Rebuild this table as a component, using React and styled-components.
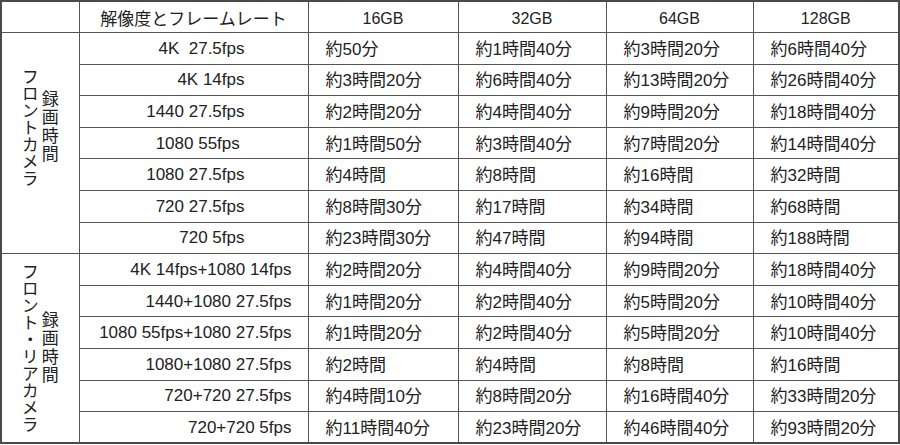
import React from "react";
import styled, { createGlobalStyle } from "styled-components";

const GlobalStyle = createGlobalStyle`
  body {
    margin: 0;
    background: #fff;
    color: #222;
  }
`;

const sizes = ["16GB", "32GB", "64GB", "128GB"];

const sections = [
  {
    label: "フロントカメラ",
    shift: 32,
    inset: 63,
    rows: [
      ["4K  27.5fps", "約50分", "約1時間40分", "約3時間20分", "約6時間40分"],
      ["4K 14fps", "約3時間20分", "約6時間40分", "約13時間20分", "約26時間40分"],
      ["1440 27.5fps", "約2時間20分", "約4時間40分", "約9時間20分", "約18時間40分"],
      ["1080 55fps ", "約1時間50分", "約3時間40分", "約7時間20分", "約14時間40分"],
      ["1080 27.5fps", "約4時間", "約8時間", "約16時間", "約32時間"],
      ["720 27.5fps", "約8時間30分", "約17時間", "約34時間", "約68時間"],
      ["720 5fps", "約23時間30分", "約47時間", "約94時間", "約188時間"],
    ],
  },
  {
    label: "フロント・リアカメラ",
    shift: 0,
    inset: 16,
    rows: [
      ["4K 14fps+1080 14fps", "約2時間20分", "約4時間40分", "約9時間20分", "約18時間40分"],
      ["1440+1080 27.5fps", "約1時間20分", "約2時間40分", "約5時間20分", "約10時間40分"],
      ["1080 55fps+1080 27.5fps", "約1時間20分", "約2時間40分", "約5時間20分", "約10時間40分"],
      ["1080+1080 27.5fps", "約2時間", "約4時間", "約8時間", "約16時間"],
      ["720+720 27.5fps", "約4時間10分", "約8時間20分", "約16時間40分", "約33時間20分"],
      ["720+720 5fps", "約11時間40分", "約23時間20分", "約46時間40分", "約93時間20分"],
    ],
  },
];

// digits are set in a narrower latin face than the kana/kanji around them
function Duration({ text }) {
  return text
    .split(/(\d+)/)
    .map((part, i) => (/\d/.test(part) ? <Num key={i}>{part}</Num> : part));
}

export default function App() {
  return (
    <>
      <GlobalStyle />
      <Table>
        <colgroup>
          <Col $w={78} />
          <Col $w={229} />
          <Col $w={150} />
          <Col $w={148} />
          <Col $w={147} />
          <Col $w={146} />
        </colgroup>
        <thead>
          <Row>
            <Corner />
            <HeadCell>解像度とフレームレート</HeadCell>
            {sizes.map((s) => (
              <HeadCell key={s}>
                <Latin>{s}</Latin>
              </HeadCell>
            ))}
          </Row>
        </thead>
        {sections.map((section) => (
          <tbody key={section.label}>
            {section.rows.map(([mode, ...times], index) => (
              <Row key={mode}>
                {index === 0 && (
                  <SideCell rowSpan={section.rows.length} $shift={section.shift}>
                    <SideLabel>
                      <Vertical>{section.label}</Vertical>
                      <Vertical $spaced>録画時間</Vertical>
                    </SideLabel>
                  </SideCell>
                )}
                <ModeCell $inset={section.inset}>{mode}</ModeCell>
                {times.map((t, i) => (
                  <TimeCell key={i}>
                    <Duration text={t} />
                  </TimeCell>
                ))}
              </Row>
            ))}
          </tbody>
        ))}
      </Table>
    </>
  );
}

const Table = styled.table`
  width: 898px;
  table-layout: fixed;
  border-collapse: collapse;
  border: 2px solid #4a4a4a;
  font-family: "Noto Sans CJK JP", "Liberation Sans", sans-serif;
  font-size: 17px;
  line-height: 1;
  color: #222;
`;

const Col = styled.col`
  width: ${(p) => p.$w}px;
`;

const Row = styled.tr`
  height: 31.6px;
`;

const Cell = styled.td`
  border: 1px solid #555;
  padding: 0;
  vertical-align: middle;
  white-space: nowrap;
`;

const Corner = styled(Cell).attrs({ as: "th" })``;

const HeadCell = styled(Cell).attrs({ as: "th" })`
  font-weight: normal;
  text-align: center;
`;

const Latin = styled.span`
  font-family: "Liberation Sans", Arial, sans-serif;
  font-size: 16px;
`;

const SideCell = styled(Cell)`
  padding-bottom: ${(p) => p.$shift}px;
`;

const SideLabel = styled.div`
  display: flex;
  justify-content: center;
  align-items: center;
  gap: 3px;
`;

const Vertical = styled.span`
  writing-mode: vertical-rl;
  font-size: 17px;
  letter-spacing: ${(p) => (p.$spaced ? "1.5px" : "0")};
  line-height: 17px;
`;

const ModeCell = styled(Cell)`
  font-family: "Liberation Sans", Arial, sans-serif;
  font-size: 17px;
  text-align: right;
  white-space: pre;
  padding-right: ${(p) => p.$inset}px;
`;

const TimeCell = styled(Cell)`
  padding-left: 17px;
  text-align: left;
`;

const Num = styled.span`
  font-family: "Liberation Sans Narrow", "Liberation Sans", sans-serif;
  font-size: 17px;
`;
